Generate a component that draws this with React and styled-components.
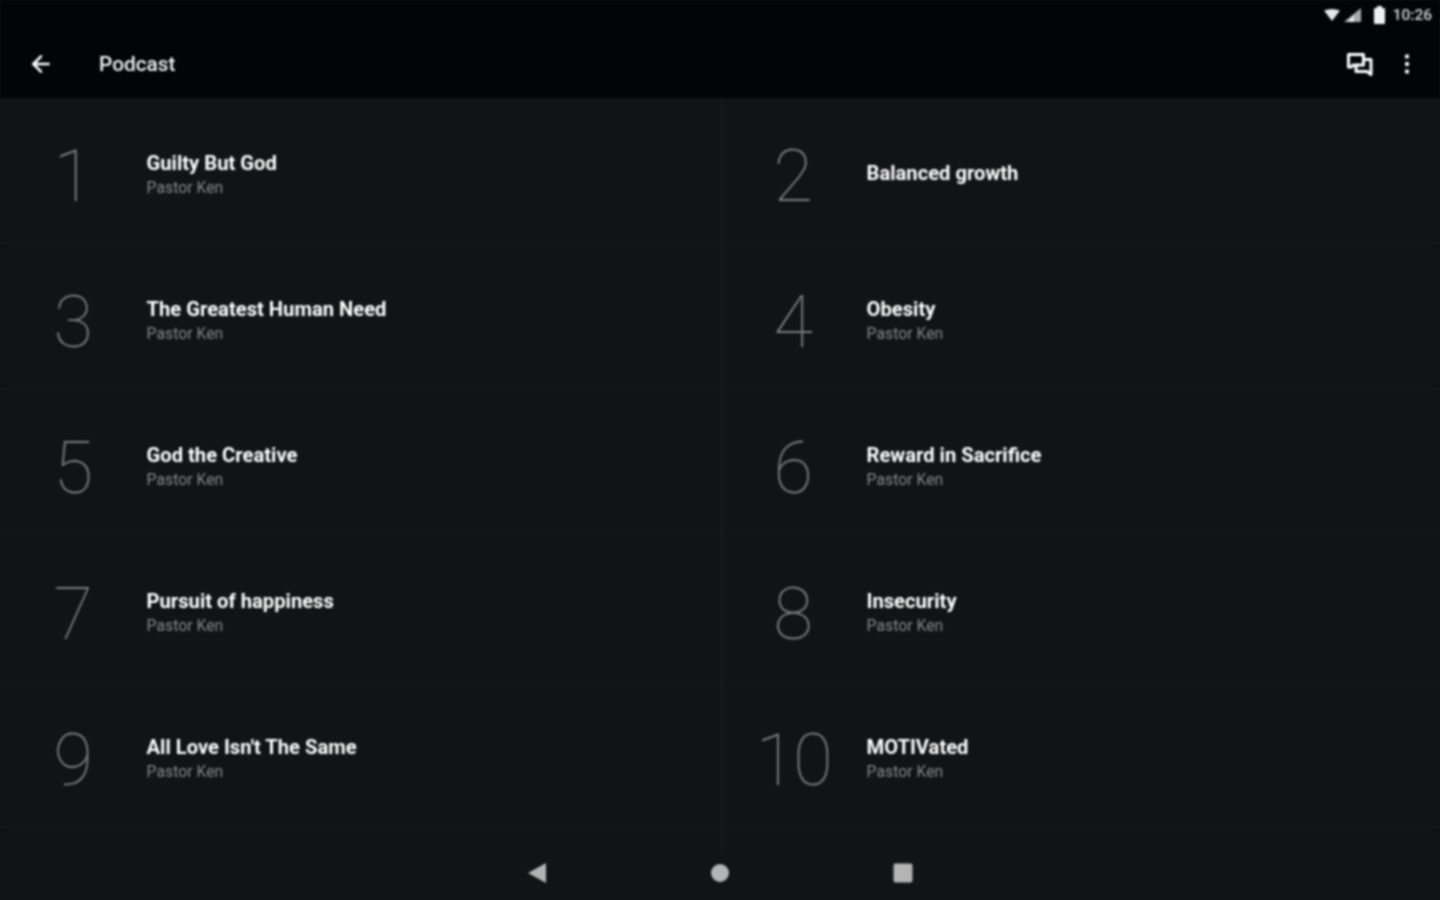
import React from "react";
import styled, { createGlobalStyle } from "styled-components";
import { ArrowLeft } from "lucide-react";

const Global = createGlobalStyle`
  html, body { margin: 0; padding: 0; background: #121315; }
  body { font-family: Roboto, "Liberation Sans", sans-serif; overflow: hidden; }
  * { box-sizing: border-box; }
`;

const Screen = styled.div`
  width: 1440px;
  height: 900px;
  display: flex;
  flex-direction: column;
  background: #121315;
  overflow: hidden;
  filter: blur(0.8px);
`;

const Header = styled.header`
  height: 98px;
  flex: none;
  background: #030406;
  display: flex;
  flex-direction: column;
`;

const StatusBar = styled.div`
  height: 32px;
  display: flex;
  align-items: center;
  justify-content: flex-end;
  gap: 4px;
  padding: 0 8px 3px 0;
  color: #d8d8d8;
`;

const Clock = styled.span`
  font-size: 15.5px;
  font-weight: 500;
  margin-left: 3px;
  color: #d8d8d8;
`;

const Toolbar = styled.div`
  height: 66px;
  display: flex;
  align-items: center;
  padding: 0 20px 2px 28px;
  color: #ffffff;
`;

const Title = styled.h1`
  margin: 0 0 0 45px;
  font-size: 20.8px;
  font-weight: 500;
  color: #f4f4f4;
  flex: 1;
`;

const ToolbarActions = styled.div`
  display: flex;
  align-items: center;
  gap: 21px;
`;

const List = styled.main`
  height: 752px;
  flex: none;
  display: grid;
  grid-template-columns: 720px 720px;
  grid-auto-rows: 146px;
  position: relative;
  &::after {
    content: "";
    position: absolute;
    left: 721px;
    top: 0;
    bottom: 0;
    width: 2px;
    background: #191a1c;
  }
`;

const Row = styled.div`
  display: flex;
  align-items: center;
  border-bottom: 2px solid #161719;
  padding-top: 9px;
`;

const Num = styled.div`
  width: 146.5px;
  flex: none;
  margin-top: 5px;
  text-align: center;
  font-size: 72px;
  font-weight: 100;
  line-height: 80px;
  color: #7a7b7d;
  letter-spacing: ${(p) => (p.$wide ? "-2px" : "0")};
`;

const Texts = styled.div`
  display: flex;
  flex-direction: column;
  gap: 2px;
`;

const RowTitle = styled.div`
  font-size: 20.2px;
  font-weight: 700;
  line-height: 24px;
  color: #ffffff;
  margin-bottom: ${(p) => (p.$solo ? "3px" : "0")};
`;

const Sub = styled.div`
  font-size: 15.8px;
  line-height: 22px;
  color: #868789;
`;

const Nav = styled.nav`
  height: 50px;
  flex: none;
  display: flex;
  align-items: center;
  justify-content: center;
  gap: 163px;
  padding-bottom: 4px;
  position: relative;
`;

const items = [
  ["1", "Guilty But God", true],
  ["2", "Balanced growth", false],
  ["3", "The Greatest Human Need", true],
  ["4", "Obesity", true],
  ["5", "God the Creative", true],
  ["6", "Reward in Sacrifice", true],
  ["7", "Pursuit of happiness", true],
  ["8", "Insecurity", true],
  ["9", "All Love Isn't The Same", true],
  ["10", "MOTIVated", true],
];

export default function App() {
  return (
    <>
      <Global />
      <Screen>
        <Header>
          <StatusBar>
            <svg width="16" height="12" viewBox="0 0 16 12"><path d="M0 1.5 Q8 -1.5 16 1.5 L8 12Z" fill="#e8e8e8" /></svg>
            <svg width="17" height="14" viewBox="0 0 17 14"><path d="M17 0V14H0Z" fill="#a8a8a8" /><path d="M10 7V14H3Z" fill="#e8e8e8" /></svg>
            <svg width="13" height="18" viewBox="0 0 13 18" style={{ marginLeft: 8 }}><path d="M1 3Q1 2 2 2H4V0H9V2H11Q12 2 12 3V17Q12 18 11 18H2Q1 18 1 17Z" fill="#f0f0f0" /></svg>
            <Clock>10:26</Clock>
          </StatusBar>
          <Toolbar>
            <ArrowLeft size={26} strokeWidth={2.4} />
            <Title>Podcast</Title>
            <ToolbarActions>
              <svg width="28" height="26" viewBox="0 0 28 26" fill="none" stroke="#ffffff" strokeWidth="3" strokeLinejoin="round">
                <path d="M3.5 3.5H18.5V14H8.5L6 16H3.5Z" />
                <path d="M18.5 8.5H26V23.5L22 20.5H11V14" />
              </svg>
              <svg width="26" height="26" viewBox="0 0 26 26" fill="#f2f2f2">
                <rect x="11" y="3.5" width="4" height="4" rx="1" />
                <rect x="11" y="11" width="4" height="4" rx="1" />
                <rect x="11" y="18.5" width="4" height="4" rx="1" />
              </svg>
            </ToolbarActions>
          </Toolbar>
        </Header>
        <List>
          {items.map(([n, t, s]) => (
            <Row key={n}>
              <Num $wide={n === "10"}>{n}</Num>
              <Texts>
                <RowTitle $solo={!s}>{t}</RowTitle>
                {s && <Sub>Pastor Ken</Sub>}
              </Texts>
            </Row>
          ))}
        </List>
        <Nav>
          <svg width="20" height="22" viewBox="0 0 20 22"><path d="M19 1V21L1 11Z" fill="#b4b4b4" /></svg>
          <svg width="20" height="20" viewBox="0 0 20 20"><circle cx="10" cy="10" r="9" fill="#b4b4b4" /></svg>
          <svg width="20" height="20" viewBox="0 0 20 20"><rect x="0.5" y="0.5" width="19" height="19" rx="2" fill="#b4b4b4" /></svg>
        </Nav>
      </Screen>
    </>
  );
}
